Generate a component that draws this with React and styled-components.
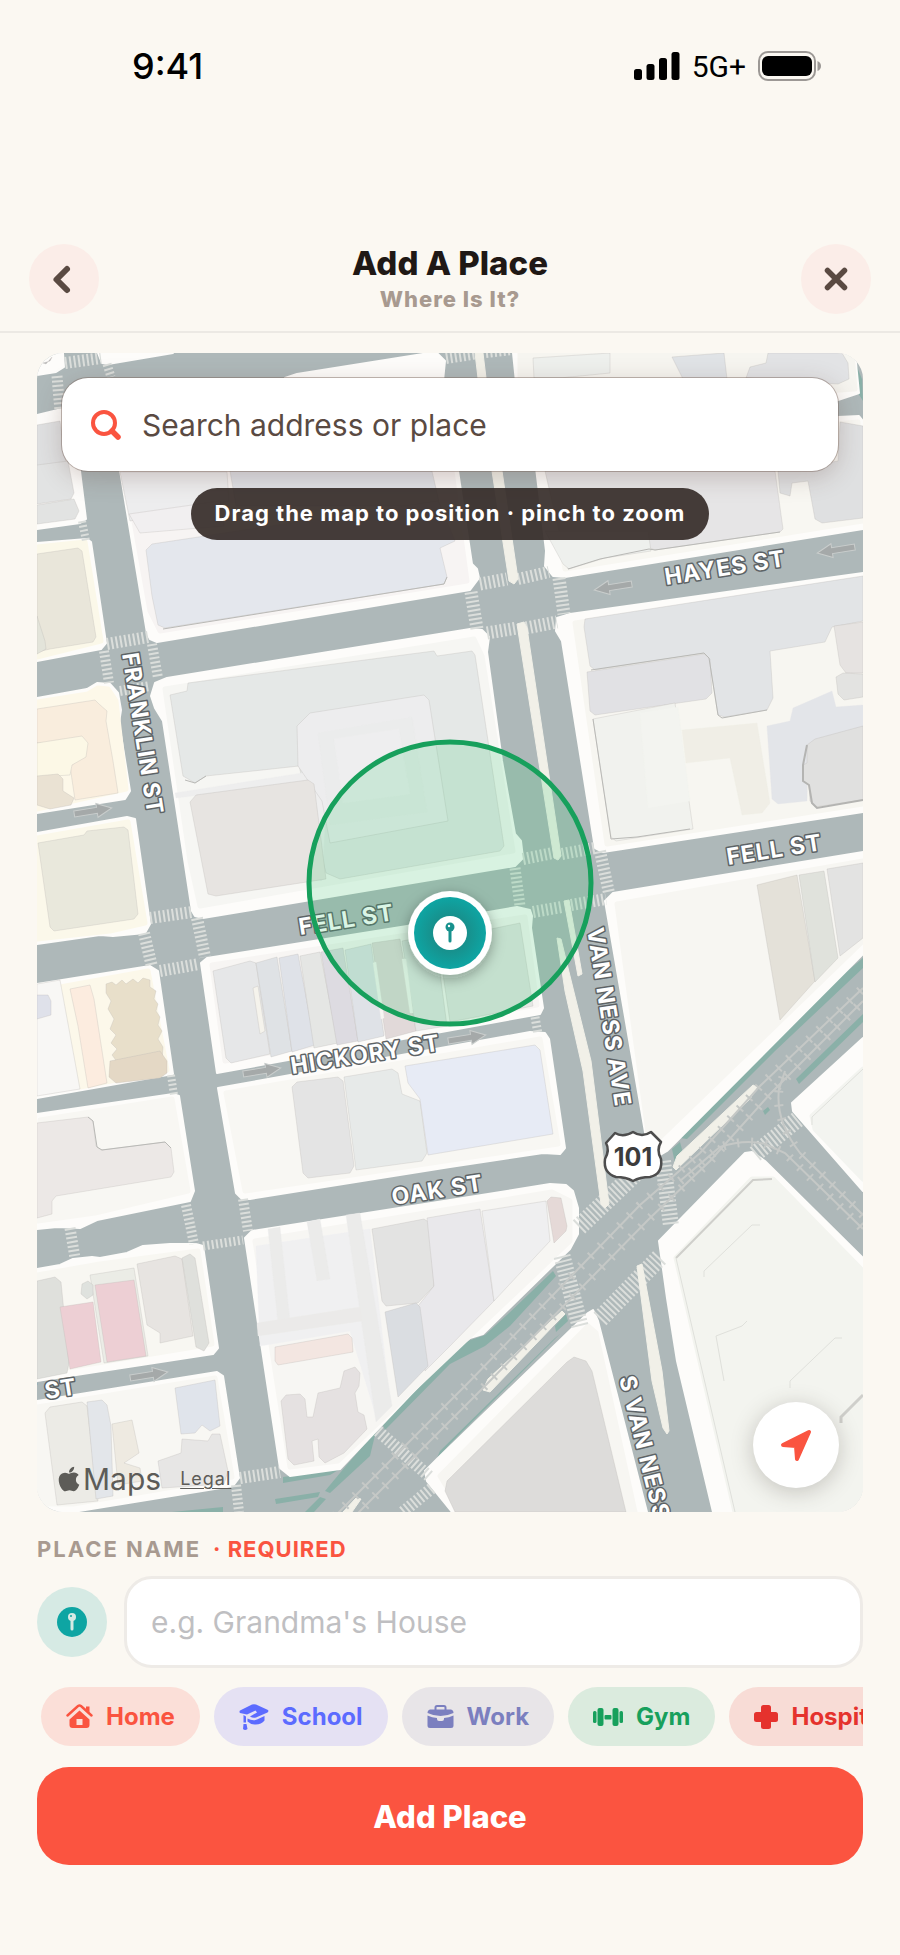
import React from "react";
import styled, { createGlobalStyle } from "styled-components";
import { FaApple } from "react-icons/fa";

const GlobalStyle = createGlobalStyle`
  *, *::before, *::after { box-sizing: border-box; }
  body { margin: 0; background: #fbf8f2; font-family: Inter, "Liberation Sans", sans-serif; color: #1f1815; }
  button, input { font: inherit; }
`;

const Screen = styled.div`
  display: flex;
  flex-direction: column;
  min-height: 100vh;
`;

const StatusBar = styled.div`
  display: flex;
  justify-content: space-between;
  align-items: center;
  height: 132px;
  padding: 0 78px 0 132px;
  color: #000;
`;

const Clock = styled.span`
  font-size: 36px;
  font-weight: 500;
`;

const StatusIcons = styled.div`
  display: flex;
  align-items: center;
  gap: 12px;
`;

const Network = styled.span`
  font-family: Roboto, sans-serif;
  font-size: 30px;
`;

const Header = styled.header`
  display: flex;
  justify-content: space-between;
  align-items: center;
  margin-top: 111px;
  padding: 0 29px 16px;
  border-bottom: 2px solid #ece9e4;
`;

const RoundButton = styled.button`
  display: grid;
  place-items: center;
  width: 70px;
  height: 70px;
  padding: 0;
  border: 0;
  border-radius: 50%;
  background: #fbede8;
  color: #5a4a42;
`;

const Titles = styled.div`
  text-align: center;
`;

const Title = styled.h1`
  margin: 0;
  font-size: 33px;
  line-height: 40px;
  font-weight: 800;
`;

const Subtitle = styled.p`
  margin: 0;
  font-size: 22px;
  line-height: 32px;
  font-weight: 800;
  color: #a89a90;
  letter-spacing: 1px;
`;

const Main = styled.main`
  display: flex;
  flex-direction: column;
  padding: 20px 37px 40px;
`;

const MapCard = styled.section`
  position: relative;
  width: 100%;
  aspect-ratio: 826 / 1159;
  border-radius: 26px;
  overflow: hidden;
`;

const MapDrawing = styled.svg`
  display: block;
  width: 100%;
  height: 100%;
`;

const StreetName = styled.text`
  font-family: Inter, sans-serif;
  font-size: 23px;
  font-weight: 700;
  letter-spacing: 1px;
  fill: #fff;
  stroke: #5d6366;
  stroke-width: 3px;
  stroke-linejoin: round;
  paint-order: stroke;
`;

const MapTop = styled.div`
  position: absolute;
  inset: 25px 25px auto;
  display: flex;
  flex-direction: column;
  align-items: center;
  gap: 17px;
`;

const SearchBox = styled.label`
  display: flex;
  align-items: center;
  gap: 20px;
  width: 100%;
  height: 93px;
  padding: 0 28px;
  border-radius: 26px;
  background: #fff;
  box-shadow: 0 0 0 1px rgba(120, 100, 90, 0.45), 0 6px 24px rgba(90, 60, 50, 0.25);
`;

const SearchInput = styled.input`
  flex: 1;
  min-width: 0;
  padding: 0;
  border: 0;
  outline: 0;
  background: none;
  font-size: 30px;
  color: #5a4a42;
  &::placeholder { color: #5a4a42; opacity: 1; }
`;

const Hint = styled.div`
  height: 52px;
  padding: 0 24px;
  border-radius: 26px;
  background: rgba(54, 44, 41, 0.92);
  color: #fff;
  font-size: 22px;
  line-height: 51px;
  font-weight: 700;
  letter-spacing: 1px;
  white-space: nowrap;
`;

const Attribution = styled.div`
  position: absolute;
  left: 18px;
  bottom: 14px;
  display: flex;
  align-items: center;
  color: #5d5c58;
`;

const MapsMark = styled.span`
  display: flex;
  align-items: center;
  font-size: 30px;
  line-height: 38px;
`;

const LegalLink = styled.a`
  margin-left: 19px;
  font-size: 18px;
  line-height: 34px;
  letter-spacing: 1px;
  color: inherit;
  text-underline-offset: 3px;
`;

const LocateButton = styled(RoundButton)`
  position: absolute;
  right: 24px;
  bottom: 24px;
  width: 86px;
  height: 86px;
  background: #fff;
  color: #fa5440;
  box-shadow: 0 4px 22px rgba(60, 50, 45, 0.25);
`;

const FieldLabel = styled.label`
  display: flex;
  gap: 12px;
  margin: 23px 0 13px;
  font-size: 22px;
  line-height: 28px;
  font-weight: 700;
  letter-spacing: 2px;
  color: #a89a90;
`;

const Required = styled.span`
  letter-spacing: 1px;
  color: #fa5440;
`;

const NameRow = styled.div`
  display: flex;
  align-items: center;
  gap: 17px;
`;

const PlaceBadge = styled(RoundButton)`
  flex: none;
  background: #d6eae4;
`;

const NameInput = styled.input`
  flex: 1;
  min-width: 0;
  height: 92px;
  padding: 0 24px;
  border: 3px solid #eeebe7;
  border-radius: 28px;
  background: #fff;
  font-size: 30px;
  font-weight: 400;
  color: #1f1815;
  &::placeholder { color: #bfbfc2; opacity: 1; }
`;

const Chips = styled.div`
  display: flex;
  gap: 14px;
  margin: 19px 0 21px;
  padding-left: 4px;
  overflow: hidden;
`;

const Chip = styled.button`
  display: flex;
  flex: none;
  align-items: center;
  gap: 13px;
  height: 59px;
  padding: 0 25px;
  border: 0;
  border-radius: 30px;
  background: ${(p) => p.$tint};
  color: ${(p) => p.$color};
  font-size: 24px;
  font-weight: 700;
`;

const Submit = styled.button`
  height: 98px;
  border: 0;
  border-radius: 32px;
  background: #fb5440;
  color: #fff;
  font-size: 31px;
  font-weight: 800;
`;

/* ---------- map data ---------- */

const blocks = [
  "37,352 63,352 64,366 56,371 37,374",
  "37,414 62,408 74,430 80,470 86,518 80,522 37,528",
  "37,542 87,538 91,541 106,642 101,648 37,660",
  "37,697 87,688 97,682 110,683 118,692 121,709 119,722 130,790 125,798 37,812",
  "37,832 127,816 135,818 150,923 145,932 113,935 100,934 37,943",
  "37,983 150,965 158,970 173,1073 37,1097",
  "37,1113 173,1093 179,1095 194,1190 190,1200 97,1219 80,1227 57,1226 37,1228",
  "37,1268 60,1264 73,1258 92,1256 100,1257 127,1252 143,1245 170,1243 196,1243 203,1245 218,1347 213,1353 37,1380",
  "37,1400 217,1371 223,1375 239,1477 233,1485 73,1511 37,1511",
  "98,352 102,362 108,363 173,352",
  "285,377 297,373 423,353 437,352 445,360 443,380",
  "116,445 455,450 472,563 477,568 479,577 470,589 157,641 150,638 147,632",
  "167,677 470,628 482,629 489,636 487,651 502,760 515,833 521,840 523,857 515,865 203,917 195,915 192,910 163,720 155,707 151,695 155,682",
  "207,957 407,925 517,906 530,909 532,915 531,927 543,1007 540,1013 217,1072 201,962",
  "218,1087 530,1031 545,1032 549,1038 565,1147 560,1153 543,1152 450,1166 250,1198 242,1198 236,1192",
  "252,1230 450,1199 550,1183 566,1184 573,1190 578,1207 578,1233 570,1248 483,1333 470,1337 452,1350 340,1468 290,1475 280,1467 245,1237",
  "513,352 855,352 859,392 838,399 520,420",
  "534,450 838,416 859,415 863,420 863,528 565,576 553,575 545,565 546,550",
  "570,613 863,572 863,811 603,851 595,847 562,640 556,630 557,617",
  "613,892 863,851 863,953 667,1150 650,1160 605,900",
  "863,1037 792,1102 793,1110 863,1190",
  "745,1152 752,1151 765,1160 863,1257 863,1511 713,1511 677,1360 667,1297 659,1240",
  "588,1312 593,1309 598,1320 647,1511 452,1511 427,1480 425,1470 438,1457",
];

const sidewalkTints = [
  { c: "#fbf8e9", p: "37,546 85,541 101,640 37,656" },
  { c: "#fdf8e9", p: "37,701 88,693 98,687 108,688 116,700 126,788 37,808" },
  { c: "#fbf8ea", p: "37,837 128,821 145,922 110,930 37,938" },
  { c: "#fcf8ea", p: "60,986 148,970 167,1069 80,1086" },
  { c: "#f8f7f3", p: "40,1119 172,1098 188,1190 95,1212 38,1220" },
  { c: "#f8f7f2", p: "37,1274 100,1263 198,1250 212,1343 37,1372" },
  { c: "#f8f7f3", p: "37,1406 215,1377 232,1476 73,1503 37,1503" },
  { c: "#f7f4f3", p: "125,470 452,470 467,580 160,630 150,610" },
  { c: "#f6f6f3", p: "165,688 474,638 482,655 513,850 200,905 190,860" },
  { c: "#f7f5f3", p: "212,964 525,916 537,1004 225,1060" },
  { c: "#f8f7f3", p: "226,1092 540,1038 558,1143 245,1190" },
  { c: "#f7f6f3", p: "255,1240 552,1191 570,1200 570,1240 338,1460 290,1466" },
  { c: "#f6f5f0", p: "520,352 852,352 855,388 520,410" },
  { c: "#f8f7f2", p: "544,450 858,421 863,520 565,568" },
  { c: "#f7f6f1", p: "575,622 863,580 863,803 607,843" },
  { c: "#f7f6f2", p: "617,903 863,860 863,940 650,1146" },
  { c: "#f3f4f0", p: "863,1068 812,1115 815,1128 863,1178" },
  { c: "#f3f4ef", p: "752,1178 773,1178 863,1270 863,1511 735,1511 676,1257" },
  { c: "#f7f6f2", p: "588,1325 596,1332 635,1511 462,1511 440,1475" },
];

const buildings = [
  { c: "#dfe0e1", p: "37,424 60,420 66,462 37,468" },
  { c: "#e2e3e3", p: "37,464 68,460 74,492 71,498 37,503" },
  { c: "#e2e3e2", p: "37,504 74,498 79,510 75,518 37,523" },
  { c: "#b9b9b9", p: "43,362 50,360 52,356 46,363" },
  { c: "#e9e6da", p: "37,553 78,547 82,550 96,636 93,641 50,648 37,651" },
  { c: "#e3e4da", p: "37,615 45,640 46,648 37,653" },
  { c: "#f9eddd", p: "37,708 95,699 99,703 107,710 106,720 113,760 118,792 75,799 70,765 85,755 83,740 37,742" },
  { c: "#fcf8e6", p: "37,742 82,735 88,742 86,756 72,764 70,774 37,776" },
  { c: "#eae2d3", p: "37,775 58,773 63,778 63,790 74,797 71,804 50,808 37,804" },
  { c: "#e9e8dc", p: "38,842 84,834 87,830 124,826 128,829 138,913 134,918 54,930 50,926" },
  { c: "#f8f7f5", p: "37,983 60,979 80,1088 37,1095" },
  { c: "#dfe1ea", p: "37,994 48,994 51,1000 51,1014 37,1018" },
  { c: "#fcecdf", p: "70,988 90,984 94,998 107,1082 88,1087 78,1025" },
  { c: "#e8dfca", p: "106,983 112,981 116,984 122,979 126,983 133,978 138,982 143,977 150,979 150,986 156,990 154,998 158,1003 156,1010 160,1016 158,1024 162,1030 158,1038 163,1046 162,1060 118,1062 112,1054 117,1048 111,1042 116,1034 110,1028 114,1018 108,1008 111,1000 106,992" },
  { c: "#e4d8c5", p: "110,1060 160,1050 167,1060 167,1072 160,1077 116,1082 109,1076" },
  { c: "#ece8e6", p: "37,1122 88,1116 93,1120 96,1145 101,1149 165,1141 171,1147 174,1171 171,1176 56,1195 52,1200 52,1213 37,1217" },
  { c: "#dfe0dc", p: "37,1280 55,1276 61,1281 69,1362 67,1372 37,1378" },
  { c: "#ebece6", p: "90,1274 134,1267 148,1355 104,1362" },
  { c: "#edcfd4", p: "60,1306 93,1301 101,1361 70,1368" },
  { c: "#edcfd4", p: "95,1284 134,1279 146,1355 107,1361" },
  { c: "#dfe2de", p: "82,1283 88,1280 93,1284 93,1294 87,1298 81,1293" },
  { c: "#e7e4e1", p: "137,1263 175,1255 182,1258 193,1335 160,1342 160,1332 147,1324" },
  { c: "#dfe0dc", p: "182,1257 190,1253 195,1257 209,1342 204,1350 196,1346" },
  { c: "#ecebe6", p: "45,1412 50,1406 82,1401 87,1405 98,1500 57,1504" },
  { c: "#e3e6ea", p: "87,1401 102,1399 107,1404 111,1425 113,1495 96,1498" },
  { c: "#eeeae1", p: "112,1423 132,1419 139,1452 124,1462 140,1467 142,1480 118,1484" },
  { c: "#e0e4eb", p: "175,1387 215,1379 220,1425 210,1430 202,1424 195,1432 181,1433" },
  { c: "#e7e6e5", p: "158,1460 181,1452 182,1438 208,1440 212,1433 220,1433 228,1470 224,1483 162,1487" },
  { c: "#ededee", p: "120,471 227,471 229,500 130,520" },
  { c: "#f1eff0", p: "129,513 220,500 224,525 140,532" },
  { c: "#dfe1e6", p: "230,470 432,470 440,505 236,505" },
  { c: "#e4e7ed", p: "146,549 152,543 438,500 455,540 440,547 447,576 444,583 165,627 158,624 152,595" },
  { c: "#e5e8e7", p: "170,694 187,690 188,682 434,650 437,655 472,650 475,654 504,845 500,850 340,878 326,872 299,765 253,770 206,775 195,782 183,775" },
  { c: "#eeeeee", flat: true, p: "175,792 315,770 326,800 322,880 310,878 300,782 176,797" },
  { c: "#ededee", p: "297,725 310,712 424,694 429,699 448,820 330,842 322,800 298,765" },
  { c: "#ebecec", flat: true, p: "318,732 412,716 427,811 330,824" },
  { c: "#eeeeef", flat: true, p: "334,738 399,728 410,793 343,802" },
  { c: "#e7e4e1", p: "190,801 196,794 308,779 314,783 326,878 216,895 208,893" },
  { c: "#e6e7e8", p: "213,970 250,960 256,962 270,1053 231,1062 226,1057" },
  { c: "#f5f3ec", p: "253,987 258,985 265,1030 260,1033" },
  { c: "#dfe2e5", p: "256,962 277,956 292,1050 271,1056" },
  { c: "#dfe2e8", p: "279,957 298,953 315,1044 292,1051" },
  { c: "#e5e6e4", p: "300,955 320,951 338,1042 314,1047" },
  { c: "#dddbe1", p: "321,951 343,947 358,1040 337,1044" },
  { c: "#dfe2e7", p: "345,949 371,943 384,1035 358,1041" },
  { c: "#e1d9d9", p: "372,942 400,938 416,1030 386,1038" },
  { c: "#e3e5e4", p: "402,940 435,934 447,1025 416,1030" },
  { c: "#e4e6e3", p: "438,939 520,922 533,1005 450,1021" },
  { c: "#f7f6f3", flat: true, p: "373,962 376,961 384,1017 381,1018" },
  { c: "#f7f6f3", flat: true, p: "402,958 406,958 413,1012 410,1012" },
  { c: "#e4e4e4", p: "292,1086 297,1081 338,1076 343,1080 354,1165 350,1172 308,1177 303,1172" },
  { c: "#e7eae9", p: "344,1076 392,1068 398,1072 402,1093 420,1100 427,1152 422,1160 356,1169" },
  { c: "#e7ebf5", p: "405,1065 535,1044 540,1049 553,1133 428,1154 420,1098 408,1082" },
  { c: "#f0f0f1", flat: true, p: "256,1245 370,1228 390,1400 376,1415 350,1330 260,1345" },
  { c: "#ebebea", flat: true, p: "268,1228 280,1226 290,1320 278,1322" },
  { c: "#ebebea", flat: true, p: "307,1221 320,1218 330,1278 317,1280" },
  { c: "#ebebea", flat: true, p: "346,1214 360,1212 392,1405 376,1421" },
  { c: "#ebeae9", flat: true, p: "257,1322 360,1306 362,1320 258,1335" },
  { c: "#f3e6e1", p: "275,1346 348,1333 352,1337 353,1351 278,1364 275,1360" },
  { c: "#e3e3e2", p: "372,1228 424,1218 430,1222 434,1285 418,1302 386,1305 382,1300" },
  { c: "#e9e8eb", p: "427,1217 480,1208 494,1300 450,1345 425,1370 418,1305 434,1285" },
  { c: "#efeff0", p: "482,1210 546,1200 550,1240 494,1300" },
  { c: "#dadde1", p: "385,1311 416,1302 420,1306 428,1365 398,1396" },
  { c: "#e5d9d7", p: "547,1200 551,1196 561,1197 567,1225 566,1230 554,1242" },
  { c: "#e5e1e1", p: "281,1400 286,1394 300,1393 305,1398 307,1416 313,1416 318,1392 340,1387 344,1370 355,1366 360,1372 359,1385 355,1392 358,1411 364,1414 367,1428 344,1452 325,1462 319,1456 318,1438 312,1440 314,1460 294,1464 288,1458" },
  { c: "#eef0ed", p: "533,357 610,352 610,372 560,377 534,377" },
  { c: "#e0e3e6", p: "672,356 724,352 727,378 683,378" },
  { c: "#e2e3e5", p: "746,377 750,366 766,362 768,352 842,352 848,362 849,378 838,383" },
  { c: "#e6e5e6", p: "545,470 775,470 783,528 780,531 655,549 648,546 595,553 568,568" },
  { c: "#dfe0e1", p: "778,470 780,492 790,495 792,482 808,480 815,518 822,522 863,517 863,425 840,421 838,460" },
  { c: "#eef0ed", p: "545,530 648,530 651,550 605,557 569,568 563,563" },
  { c: "#e2e4e6", p: "585,618 863,575 863,620 832,626 825,641 770,650 773,697 767,709 725,716 718,714 709,657 704,652 595,669 590,665 584,626" },
  { c: "#e1e1e4", p: "587,671 704,653 710,658 712,692 706,698 595,714 590,710" },
  { c: "#e6e3e1", p: "834,625 863,621 863,672 846,672 840,664" },
  { c: "#e3e3e1", p: "836,676 843,672 863,673 863,696 844,699 838,693" },
  { c: "#f1f2ee", p: "593,718 675,702 693,828 616,840 611,836" },
  { c: "#f3f4f0", flat: true, p: "640,712 678,706 690,800 648,807" },
  { c: "#f0eee6", flat: true, p: "682,729 757,722 770,802 762,812 742,814 730,757 686,762" },
  { c: "#e3e5e9", flat: true, p: "767,725 790,720 793,707 832,690 836,706 863,704 863,745 808,750 807,800 778,803 772,798" },
  { c: "#e0e0df", p: "807,744 815,738 863,725 863,799 815,806 810,800 809,784 803,780 803,764 807,762" },
  { c: "#e4e1d9", p: "757,884 797,874 815,980 780,1019" },
  { c: "#e0e2dc", p: "799,874 824,870 838,957 815,981" },
  { c: "#e3e3e2", p: "827,868 863,862 863,937 840,955" },
  { c: "#dddcda", p: "567,1361 574,1356 586,1360 592,1370 626,1511 455,1511 445,1490 447,1480" },
];

const crosswalks = [
  [65, 362, 101, 357, 12], [57, 375, 60, 410, 11], [107, 363, 111, 376, 9], [446, 357, 478, 352, 12], [486, 353, 512, 350, 8],
  [82, 520, 86, 540, 8],
  [107, 643, 148, 636, 12], [104, 650, 109, 682, 10], [152, 643, 158, 677, 10], [120, 690, 150, 685, 10],
  [150, 917, 192, 911, 12], [144, 932, 152, 966, 12], [197, 917, 205, 956, 12], [160, 970, 199, 963, 12],
  [171, 1074, 174, 1094, 8],
  [186, 1204, 194, 1243, 10], [243, 1198, 248, 1230, 10], [203, 1245, 243, 1239, 9], [70, 1227, 75, 1257, 11],
  [240, 1477, 280, 1471, 12], [236, 1484, 239, 1511, 10],
  [480, 583, 507, 578, 13], [518, 578, 549, 571, 12], [471, 591, 477, 628, 13], [559, 577, 564, 613, 13], [487, 632, 517, 627, 13], [526, 627, 557, 621, 13],
  [523, 858, 553, 852, 12], [562, 853, 595, 847, 12], [515, 867, 520, 905, 11], [600, 850, 609, 892, 12], [533, 911, 562, 906, 12], [571, 904, 606, 898, 12],
  [535, 1016, 538, 1033, 9],
  [579, 1226, 648, 1160, 18], [663, 1160, 671, 1225, 16], [562, 1255, 580, 1325, 17], [600, 1318, 660, 1256, 18], [755, 1153, 798, 1118, 17],
  [378, 1430, 430, 1476, 12], [403, 1511, 432, 1487, 12],
];

const medians = [
  "475,352 483,352 486,377 478,377",
  "492,470 502,470 518,578 514,583 509,580",
  "517,623 524,621 527,627 561,855 558,859 554,857",
  "564,900 569,899 582,973 578,975",
  "557,937 561,938 570,975 591,1060 609,1203 605,1207 601,1203 583,1070 565,990",
  "637,1265 642,1263 662,1370 669,1430 667,1433 663,1427 652,1380",
  "483,1389 488,1378 562,1310 565,1313 555,1323 490,1391",
  "673,1166 677,1155 753,1084 757,1086 750,1098 676,1169",
  "343,1511 356,1497 361,1498 352,1511",
];

const lanes = [
  "863,957 845,972 770,1042 680,1137 687,1138 775,1050 863,967",
  "863,1013 796,1078 799,1083 863,1021",
  "672,1148 680,1141 683,1152 675,1162",
  "763,1110 768,1106 770,1109 765,1114",
  "553,1270 508,1313 485,1334 465,1341 450,1353 382,1422 385,1429 450,1363 485,1345 510,1325 556,1275",
  "566,1313 555,1325 556,1331 568,1320",
  "560,1333 450,1443 437,1457 440,1450 555,1337",
  "376,1430 345,1466 325,1490 330,1492 370,1455",
  "283,1476 340,1468 330,1474 283,1482",
  "275,1498 320,1491 318,1496 276,1503",
  "305,1511 320,1496 326,1498 314,1511",
  "172,1511 223,1506 223,1511",
  "855,361 862,378 863,400 858,392",
];

const rails = [
  "M325 1525 L470 1380 L640 1204 L700 1152 L760 1085 L863 987",
  "M345 1525 L480 1390 L650 1217 L710 1160 L770 1093 L863 1000",
  "M680 1180 L720 1146 Q745 1138 765 1143 L785 1152 L863 1228",
  "M863 1214 L800 1152 Q775 1120 779 1088 L785 1070",
];

const arrows = [
  [613, 586, 171], [836, 549, 171], [93, 810, -9], [262, 1070, -9], [467, 1037, -9], [149, 1374, -9],
];

const labels = [
  { t: "FRANKLIN ST", x: 122, y: 653, a: 81 },
  { t: "HAYES ST", x: 666, y: 584, a: -9 },
  { t: "FELL ST", x: 300, y: 934, a: -9 },
  { t: "FELL ST", x: 728, y: 864, a: -9 },
  { t: "HICKORY ST", x: 292, y: 1073, a: -9 },
  { t: "OAK ST", x: 393, y: 1204, a: -9 },
  { t: "VAN NESS AVE", x: 587, y: 928, a: 81 },
  { t: "S VAN NESS", x: 619, y: 1377, a: 76 },
  { t: "Y ST", x: 22, y: 1402, a: -9 },
];

const points = (list) => list.map((p) => <polygon key={p} points={p} />);

function StreetMap() {
  return (
    <MapDrawing viewBox="37 352 826 1159" preserveAspectRatio="xMidYMid slice" role="img" aria-label="Street map around Fell St and Van Ness Ave">
      <defs>
        <radialGradient id="pin">
          <stop offset="0.5" stopColor="#17918d" />
          <stop offset="1" stopColor="#0ea5a3" />
        </radialGradient>
        <filter id="soft" x="-40%" y="-40%" width="180%" height="180%">
          <feDropShadow dx="0" dy="4" stdDeviation="7" floodColor="#222" floodOpacity="0.35" />
        </filter>
      </defs>
      <rect x="37" y="352" width="826" height="1159" fill="#aeb8b9" />
      <g fill="#8ab0a8">{points(lanes)}</g>
      <g fill="#fdfcfa" stroke="#fdfcfa" strokeWidth="2" strokeLinejoin="round">{points(blocks)}</g>
      <g strokeWidth="5" strokeLinejoin="round">
        {sidewalkTints.map((s) => <polygon key={s.p} points={s.p} fill={s.c} stroke={s.c} />)}
      </g>
      {buildings.map((b) => (
        <polygon key={b.p} points={b.p} fill={b.c} stroke={b.flat ? b.c : "#b9b7b3"} strokeOpacity="0.3" strokeWidth="1" strokeLinejoin="round" />
      ))}
      <g fill="none" stroke="#b9b9b6" strokeWidth="1">
        <path d="M163 628 L444 583 L447 576 M185 779 L195 782 L206 775 M591 669 L704 652 L709 657 L718 714 L722 717 L767 709 M568 568 L600 558 L649 548 L655 549 L780 531 M593 718 L611 838 L637 836 L690 828" />
        <path d="M88 1116 L93 1120 L97 1146 L102 1149 L165 1141 L171 1147" />
        <path d="M807 744 L803 764 V780 L809 784 L812 802 L817 807 L863 799" stroke="#b4b4b2" strokeWidth="2" />
      </g>
      <g fill="none" stroke="#dfe0db" strokeWidth="1">
        <path d="M676 1257 L753 1179 L772 1178" stroke="#cfcfcb" strokeWidth="2" />
        <path d="M676 1257 L735 1511 M704 1276 V1270 L752 1224 L760 1224 M724 1380 L716 1335 L742 1325 L747 1320 M790 1387 V1380 L835 1337 H842" />
        <path d="M863 1394 L841 1416 V1422" stroke="#cfcfcb" strokeWidth="3" />
        <path d="M863 1068 L812 1116 V1124" />
      </g>
      {crosswalks.map(([x1, y1, x2, y2, w]) => (
        <line key={`${x1}-${y1}`} x1={x1} y1={y1} x2={x2} y2={y2} stroke="#dbdedb" strokeWidth={w} strokeDasharray="2 2.4" />
      ))}
      <g fill="#f1f0e8" stroke="#f1f0e8" strokeWidth="1" strokeLinejoin="round">{points(medians)}</g>
      <g fill="none" stroke="#c5c8c6">
        {rails.map((d) => (
          <g key={d}>
            <path d={d} strokeWidth="2" />
            <path d={d} strokeWidth="9" strokeDasharray="2 12" />
          </g>
        ))}
      </g>
      {arrows.map(([x, y, a]) => (
        <path key={`${x}-${y}`} transform={`translate(${x} ${y}) rotate(${a})`} d="M-19 -3 H4 V-7 L19 0 L4 7 V3 H-19 Z" fill="#a5a9a9" stroke="#c9cdcc" />
      ))}
      {labels.map((l) => (
        <StreetName key={`${l.t}-${l.x}`} transform={`translate(${l.x} ${l.y}) rotate(${l.a})`}>{l.t}</StreetName>
      ))}
      <path
        d="M615 1132 Q623 1137 633 1131 Q642 1137 651 1131 L661 1141 Q656 1149 661 1158 Q663 1173 650 1176 Q640 1176 633 1180 Q626 1176 616 1176 Q603 1172 605 1158 Q610 1149 606 1142 Z"
        fill="#fff" stroke="#4d4d4d" strokeWidth="2.5" strokeLinejoin="round"
      />
      <text x="633" y="1165" textAnchor="middle" fontFamily="Inter, sans-serif" fontSize="25" fontWeight="700" fill="#3c3c3c">101</text>
      <circle cx="450" cy="882" r="141" fill="#3ccb76" fillOpacity="0.19" stroke="#17a05c" strokeWidth="5" />
      <circle cx="450" cy="932" r="42" fill="#fff" filter="url(#soft)" />
      <circle cx="450" cy="932" r="36" fill="url(#pin)" />
      <circle cx="450" cy="932" r="17" fill="#fff" />
      <path d="M450 926 V940" stroke="#17918d" strokeWidth="3" strokeLinecap="round" />
      <circle cx="450" cy="926" r="4.5" fill="#17918d" />
      <circle cx="449" cy="925" r="1.2" fill="#fff" />
    </MapDrawing>
  );
}

/* ---------- icons ---------- */

const SignalIcon = () => (
  <svg width="46" height="28" viewBox="0 0 46 28" aria-hidden="true">
    <rect x="0" y="17" width="8" height="11" rx="2.5" />
    <rect x="12.5" y="12" width="8" height="16" rx="2.5" />
    <rect x="25" y="6" width="8" height="22" rx="2.5" />
    <rect x="37.5" y="0" width="8" height="28" rx="2.5" />
  </svg>
);

const BatteryIcon = () => (
  <svg width="64" height="30" viewBox="0 0 64 30" aria-hidden="true">
    <rect x="1" y="1" width="56" height="28" rx="9" fill="none" stroke="#9c9895" strokeWidth="2" />
    <rect x="4" y="5" width="50" height="20" rx="6" />
    <path d="M59.5 10 Q63 11.5 63 15 Q63 18.5 59.5 20 Z" fill="#9c9895" />
  </svg>
);

const SearchIcon = () => (
  <svg width="32" height="32" viewBox="0 0 32 32" fill="none" stroke="#fa5440" aria-hidden="true">
    <circle cx="14" cy="14" r="11" strokeWidth="4" />
    <path d="M22 22 L28 28" strokeWidth="5.5" strokeLinecap="round" />
  </svg>
);

const BackIcon = () => (
  <svg width="32" height="32" viewBox="0 0 32 32" fill="none" stroke="currentColor" strokeWidth="6" strokeLinecap="round" strokeLinejoin="round" aria-hidden="true">
    <path d="M19 6 L8.5 16.5 L19 27" />
  </svg>
);

const CloseIcon = () => (
  <svg width="32" height="32" viewBox="0 0 32 32" stroke="currentColor" strokeWidth="5.5" strokeLinecap="round" aria-hidden="true">
    <path d="M7.5 7.5 L24.5 24.5 M24.5 7.5 L7.5 24.5" />
  </svg>
);

const LocateIcon = () => (
  <svg width="34" height="34" viewBox="0 0 34 34" fill="currentColor" stroke="currentColor" strokeWidth="4" strokeLinejoin="round" aria-hidden="true">
    <path d="M4 17 L30 4 L18 31 L17 18 Z" />
  </svg>
);

const PinIcon = () => (
  <svg width="30" height="30" viewBox="0 0 30 30" aria-hidden="true">
    <circle cx="15" cy="15" r="15" fill="#0ea5a3" />
    <path d="M15 10 V22" stroke="#d6eae4" strokeWidth="3" strokeLinecap="round" />
    <circle cx="15" cy="10" r="4" fill="#d6eae4" />
    <circle cx="14" cy="9" r="1" fill="#0ea5a3" />
  </svg>
);

const HomeIcon = () => (
  <svg width="27" height="27" viewBox="0 0 27 27" fill="currentColor" aria-hidden="true">
    <path d="M1.5 12.5 L12 3 Q13.5 2 15 3 L25.5 12.5" fill="none" stroke="currentColor" strokeWidth="2.4" strokeLinecap="round" />
    <path d="M20 3.5 h3.5 v6 l-3.5 -3 Z" />
    <path fillRule="evenodd" d="M13.5 7.5 L23.5 16.5 V22 Q23.5 25 20.5 25 H6.500 Q3.5 25 3.5 22 V16.5 Z M10.5 16 V22 H16.5 V16 Z" />
  </svg>
);

const SchoolIcon = () => (
  <svg width="30" height="28" viewBox="0 0 30 28" fill="currentColor" aria-hidden="true">
    <path d="M1 7.5 L13 1.5 Q15 0.8 17 1.5 L29 7 Q30 8.5 28.5 9.5 L17 14.5 Q14 15.5 11 13.5 L18 9.5 L16.5 7.5 L8 11.5 L1 10 Q0 8.5 1 7.5 Z" />
    <path d="M8.5 15.5 Q14 18.5 18 16.5 L25.5 13 V17.5 Q22 22 15.5 21.5 Q11 21 8.5 18.5 Z" />
    <path d="M4.5 12 L7 13.5 V19.5 H4.5 Z M4.5 21 H7.5 L8.5 26 Q6 28 4 26 Z" />
  </svg>
);

const WorkIcon = () => (
  <svg width="27" height="26" viewBox="0 0 27 26" fill="currentColor" aria-hidden="true">
    <path d="M8.5 6 V3.5 Q8.5 2 10 2 H17 Q18.5 2 18.5 3.5 V6" fill="none" stroke="currentColor" strokeWidth="2" />
    <path d="M3 5.5 H24 Q26.5 6 26.5 9 Q20 12 13.5 12 Q7 12 0.5 9 Q0.5 6 3 5.5 Z" />
    <path d="M0.5 11.5 Q5 13.5 10 14 V15 Q10 17 12 17 H15 Q17 17 17 15 V14 Q22 13.5 26.5 11.5 V21.5 Q26.5 24 24 24 H3 Q0.5 24 0.5 21.5 Z" />
  </svg>
);

const GymIcon = () => (
  <svg width="30" height="20" viewBox="0 0 30 20" fill="currentColor" aria-hidden="true">
    <rect x="0" y="4" width="3.5" height="12" rx="1.5" />
    <rect x="4.5" y="1" width="6" height="18" rx="2" />
    <rect x="11.5" y="8" width="7" height="4.5" rx="1" />
    <rect x="19.5" y="1" width="6" height="18" rx="2" />
    <rect x="26.5" y="4" width="3.5" height="12" rx="1.5" />
  </svg>
);

const CrossIcon = () => (
  <svg width="24" height="24" viewBox="0 0 24 24" fill="currentColor" aria-hidden="true">
    <rect x="7" y="0" width="10" height="24" rx="2.5" />
    <rect x="0" y="7" width="24" height="10" rx="2.5" />
  </svg>
);

const categories = [
  { label: "Home", tint: "#fbdfd8", color: "#fa5440", Icon: HomeIcon },
  { label: "School", tint: "#e5e1f3", color: "#5c6bff", Icon: SchoolIcon },
  { label: "Work", tint: "#e8e5e8", color: "#7b7fbf", Icon: WorkIcon },
  { label: "Gym", tint: "#dbebde", color: "#17a05c", Icon: GymIcon },
  { label: "Hospital", tint: "#f8dcd6", color: "#e5322d", Icon: CrossIcon },
];

export default function App() {
  return (
    <Screen>
      <GlobalStyle />
      <StatusBar>
        <Clock>9:41</Clock>
        <StatusIcons>
          <SignalIcon />
          <Network>5G+</Network>
          <BatteryIcon />
        </StatusIcons>
      </StatusBar>
      <Header>
        <RoundButton type="button" aria-label="Back"><BackIcon /></RoundButton>
        <Titles>
          <Title>Add A Place</Title>
          <Subtitle>Where Is It?</Subtitle>
        </Titles>
        <RoundButton type="button" aria-label="Close"><CloseIcon /></RoundButton>
      </Header>
      <Main>
        <MapCard>
          <StreetMap />
          <MapTop>
            <SearchBox>
              <SearchIcon />
              <SearchInput type="search" placeholder="Search address or place" aria-label="Search address or place" />
            </SearchBox>
            <Hint>Drag the map to position · pinch to zoom</Hint>
          </MapTop>
          <Attribution>
            <MapsMark><FaApple size={28} aria-hidden="true" />Maps</MapsMark>
            <LegalLink href="#legal">Legal</LegalLink>
          </Attribution>
          <LocateButton type="button" aria-label="Use my location"><LocateIcon /></LocateButton>
        </MapCard>
        <FieldLabel htmlFor="place-name">
          PLACE NAME <Required>· REQUIRED</Required>
        </FieldLabel>
        <NameRow>
          <PlaceBadge type="button" aria-label="Choose icon"><PinIcon /></PlaceBadge>
          <NameInput id="place-name" placeholder="e.g. Grandma's House" />
        </NameRow>
        <Chips>
          {categories.map(({ label, tint, color, Icon }) => (
            <Chip key={label} type="button" $tint={tint} $color={color}><Icon />{label}</Chip>
          ))}
        </Chips>
        <Submit type="button">Add Place</Submit>
      </Main>
    </Screen>
  );
}
